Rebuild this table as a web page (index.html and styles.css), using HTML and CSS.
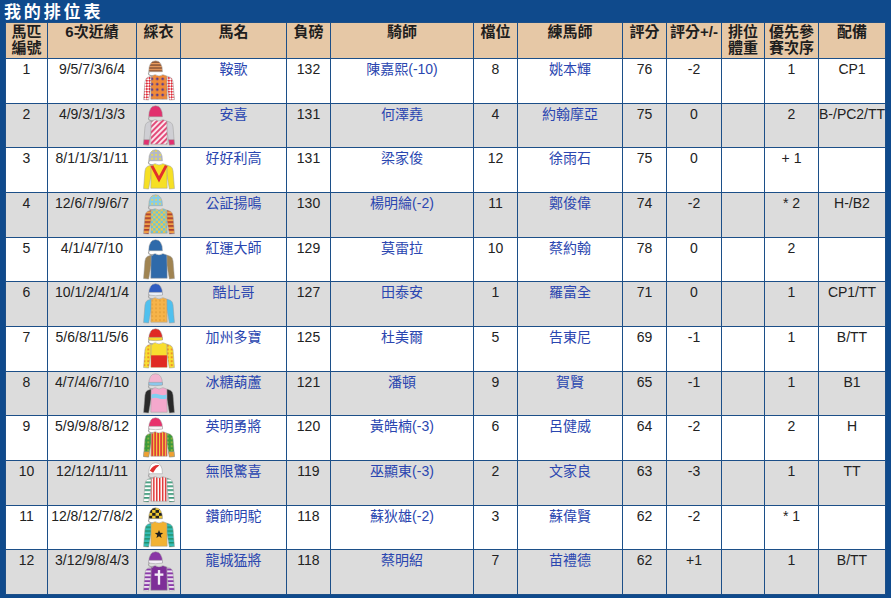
FILE: index.html
```html
<!DOCTYPE html>
<html lang="zh-Hant">
<head>
<meta charset="utf-8">
<title>我的排位表</title>
<link rel="stylesheet" href="styles.css">
</head>
<body>
<svg class="defs" width="0" height="0" aria-hidden="true">
  <defs>
    <path id="sl" d="M13,16.5 L9,17.8 Q7,19 6.6,22.5 L5.2,40.5 L10.4,41 L13,26 Z"/>
    <path id="sr" d="M29,16.5 L33,17.8 Q35,19 35.4,22.5 L36.8,40.5 L31.6,41 L29,26 Z"/>
    <path id="bd" d="M13,16.5 L17,15 Q21,17.8 25,15 L29,16.5 L29.4,40.2 L12.6,40.2 Z"/>
    <path id="cp" d="M10.5,12 Q10.5,0.8 17.5,0.8 Q24.5,0.8 24.5,12 Z"/>
    <path id="br" d="M10.4,9.6 L24.6,9.6 L24.6,12.3 Q17.5,13.8 10.4,12.3 Z"/>
    <path id="st" d="M11.2,12 Q8,15.5 15,16.5"/>
    <path id="cfl" d="M5.6,35.5 L11.2,35.5 L10.4,41 L5.2,40.5 Z"/>
    <path id="cfr" d="M36.4,35.5 L30.8,35.5 L31.6,41 L36.8,40.5 Z"/>
    <pattern id="hBO" width="4" height="3" patternUnits="userSpaceOnUse"><rect width="4" height="3" fill="#8a5638"/><rect width="4" height="1.3" fill="#f0a060"/></pattern>
    <pattern id="dOP" width="5.5" height="5.5" patternUnits="userSpaceOnUse"><rect width="5.5" height="5.5" fill="#f08a38"/><circle cx="2.75" cy="2.75" r="1.4" fill="#5a3c8c"/></pattern>
    <pattern id="cRW" width="4" height="4" patternUnits="userSpaceOnUse" patternTransform="rotate(45)"><rect width="4" height="4" fill="#ffffff"/><rect width="2" height="2" fill="#e0303c"/><rect x="2" y="2" width="2" height="2" fill="#e0303c"/></pattern>
    <pattern id="gWP" width="4" height="4" patternUnits="userSpaceOnUse" patternTransform="rotate(45)"><rect width="4" height="4" fill="#fbe4ec"/><rect width="2" height="4" fill="#e24a78"/></pattern>
    <pattern id="dGY" width="4" height="4" patternUnits="userSpaceOnUse"><rect width="4" height="4" fill="#b4b8c8"/><circle cx="2" cy="2" r="1" fill="#f2e040"/></pattern>
    <pattern id="dBY" width="4" height="4" patternUnits="userSpaceOnUse"><rect width="4" height="4" fill="#86cde6"/><circle cx="2" cy="2" r="1" fill="#f4d050"/></pattern>
    <pattern id="cYB" width="5" height="5" patternUnits="userSpaceOnUse"><rect width="5" height="5" fill="#f2c648"/><rect width="2.5" height="2.5" fill="#64c4e2"/><rect x="2.5" y="2.5" width="2.5" height="2.5" fill="#64c4e2"/></pattern>
    <pattern id="hOR" width="4" height="4" patternUnits="userSpaceOnUse"><rect width="4" height="4" fill="#f0a048"/><rect width="4" height="1.6" fill="#a0302a"/></pattern>
    <pattern id="dOD" width="4" height="4" patternUnits="userSpaceOnUse"><rect width="4" height="4" fill="#f6b44a"/><circle cx="2" cy="2" r="0.7" fill="#d08a24"/></pattern>
    <pattern id="dYR" width="4" height="4" patternUnits="userSpaceOnUse"><rect width="4" height="4" fill="#f8de30"/><circle cx="2" cy="2" r="0.8" fill="#e03020"/></pattern>
    <pattern id="vRY" width="3" height="3" patternUnits="userSpaceOnUse"><rect width="3" height="3" fill="#e03838"/><rect width="1.2" height="3" fill="#f2d040"/></pattern>
    <pattern id="dGG" width="4" height="4" patternUnits="userSpaceOnUse"><rect width="4" height="4" fill="#3c9a3c"/><circle cx="2" cy="2" r="0.8" fill="#e8d040"/></pattern>
    <pattern id="vRW" width="3" height="3" patternUnits="userSpaceOnUse"><rect width="3" height="3" fill="#ffffff"/><rect width="1.5" height="3" fill="#e03030"/></pattern>
    <pattern id="hWG" width="4" height="4" patternUnits="userSpaceOnUse"><rect width="4" height="4" fill="#ffffff"/><rect width="4" height="1.6" fill="#1f8a66"/></pattern>
    <pattern id="cKY" width="7" height="6" patternUnits="userSpaceOnUse"><rect width="7" height="6" fill="#f0c830"/><rect width="3.5" height="3" fill="#222222"/><rect x="3.5" y="3" width="3.5" height="3" fill="#222222"/></pattern>
    <pattern id="hTG" width="4" height="4" patternUnits="userSpaceOnUse"><rect width="4" height="4" fill="#34beb6"/><rect width="4" height="1.4" fill="#1f8a60"/></pattern>
    <pattern id="hPW" width="4" height="4" patternUnits="userSpaceOnUse"><rect width="4" height="4" fill="#8a3aa8"/><rect width="4" height="1.7" fill="#ffffff"/></pattern>
  </defs>
</svg>

<div class="frame">
  <div class="title">我 的 排 位 表</div>
  <table class="draw">
    <colgroup>
      <col class="c-no"><col class="c-form"><col class="c-silk"><col class="c-horse"><col class="c-wt"><col class="c-jockey"><col class="c-draw"><col class="c-trainer"><col class="c-rate"><col class="c-chg"><col class="c-bw"><col class="c-pri"><col class="c-gear">
    </colgroup>
    <thead>
      <tr>
        <th>馬匹<br>編號</th><th>6次近績</th><th>綵衣</th><th>馬名</th><th>負磅</th><th>騎師</th><th>檔位</th><th>練馬師</th><th>評分</th><th>評分+/-</th><th>排位<br>體重</th><th>優先參<br>賽次序</th><th>配備</th>
      </tr>
    </thead>
    <tbody>
      <tr>
        <td>1</td><td>9/5/7/3/6/4</td>
        <td class="silkcell"><svg class="silk" viewBox="0 0 42 42"><use href="#sl" fill="url(#cRW)"/><use href="#sr" fill="url(#cRW)"/><use href="#bd" fill="url(#dOP)"/><use href="#cp" fill="url(#hBO)"/><use href="#st" class="strap"/></svg></td>
        <td><a href="#">鞍歌</a></td><td>132</td><td><a href="#">陳嘉熙(-10)</a></td><td>8</td><td><a href="#">姚本輝</a></td><td>76</td><td>-2</td><td></td><td>1</td><td>CP1</td>
      </tr>
      <tr>
        <td>2</td><td>4/9/3/1/3/3</td>
        <td class="silkcell"><svg class="silk" viewBox="0 0 42 42"><use href="#sl" fill="#cfcfd4"/><use href="#sr" fill="#cfcfd4"/><use href="#cfl" fill="#e23070"/><use href="#cfr" fill="#e23070"/><use href="#bd" fill="url(#gWP)"/><use href="#cp" fill="#e2306e"/><use href="#st" class="strap"/></svg></td>
        <td><a href="#">安喜</a></td><td>131</td><td><a href="#">何澤堯</a></td><td>4</td><td><a href="#">約翰摩亞</a></td><td>75</td><td>0</td><td></td><td>2</td><td>B-/PC2/TT</td>
      </tr>
      <tr>
        <td>3</td><td>8/1/1/3/1/11</td>
        <td class="silkcell"><svg class="silk" viewBox="0 0 42 42"><use href="#sl" fill="#f6e024"/><use href="#sr" fill="#f6e024"/><use href="#bd" fill="#f6e024"/><path class="mark-v" d="M13.6,17 L21,31 L28.4,17"/><use href="#cp" fill="url(#dGY)"/><use href="#st" class="strap"/></svg></td>
        <td><a href="#">好好利高</a></td><td>131</td><td><a href="#">梁家俊</a></td><td>12</td><td><a href="#">徐雨石</a></td><td>75</td><td>0</td><td></td><td>+ 1</td><td></td>
      </tr>
      <tr>
        <td>4</td><td>12/6/7/9/6/7</td>
        <td class="silkcell"><svg class="silk" viewBox="0 0 42 42"><use href="#sl" fill="url(#hOR)"/><use href="#sr" fill="url(#hOR)"/><use href="#bd" fill="url(#cYB)"/><use href="#cp" fill="url(#dBY)"/><use href="#st" class="strap"/></svg></td>
        <td><a href="#">公証揚鳴</a></td><td>130</td><td><a href="#">楊明綸(-2)</a></td><td>11</td><td><a href="#">鄭俊偉</a></td><td>74</td><td>-2</td><td></td><td>* 2</td><td>H-/B2</td>
      </tr>
      <tr>
        <td>5</td><td>4/1/4/7/10</td>
        <td class="silkcell"><svg class="silk" viewBox="0 0 42 42"><use href="#sl" fill="#a08452"/><use href="#sr" fill="#a08452"/><use href="#bd" fill="#2f6aaa"/><use href="#cp" fill="#2f6aaa"/><use href="#st" class="strap"/></svg></td>
        <td><a href="#">紅運大師</a></td><td>129</td><td><a href="#">莫雷拉</a></td><td>10</td><td><a href="#">蔡約翰</a></td><td>78</td><td>0</td><td></td><td>2</td><td></td>
      </tr>
      <tr>
        <td>6</td><td>10/1/2/4/1/4</td>
        <td class="silkcell"><svg class="silk" viewBox="0 0 42 42"><use href="#sl" fill="#4fc0ee"/><use href="#sr" fill="#4fc0ee"/><use href="#bd" fill="url(#dOD)"/><use href="#cp" fill="#2f5cc0"/><use href="#br" fill="#e8eef8"/><use href="#st" class="strap"/></svg></td>
        <td><a href="#">酷比哥</a></td><td>127</td><td><a href="#">田泰安</a></td><td>1</td><td><a href="#">羅富全</a></td><td>71</td><td>0</td><td></td><td>1</td><td>CP1/TT</td>
      </tr>
      <tr>
        <td>7</td><td>5/6/8/11/5/6</td>
        <td class="silkcell"><svg class="silk" viewBox="0 0 42 42"><use href="#sl" fill="url(#dYR)"/><use href="#sr" fill="url(#dYR)"/><use href="#bd" fill="#f8de30"/><rect class="band" x="12.9" y="28" width="16.2" height="12.2" fill="#e02a24"/><use href="#cp" fill="#e02a24"/><use href="#br" fill="#f8d830"/><use href="#st" class="strap"/></svg></td>
        <td><a href="#">加州多寶</a></td><td>125</td><td><a href="#">杜美爾</a></td><td>5</td><td><a href="#">告東尼</a></td><td>69</td><td>-1</td><td></td><td>1</td><td>B/TT</td>
      </tr>
      <tr>
        <td>8</td><td>4/7/4/6/7/10</td>
        <td class="silkcell"><svg class="silk" viewBox="0 0 42 42"><use href="#sl" fill="#2a2a2a"/><use href="#sr" fill="#2a2a2a"/><use href="#bd" fill="#f4a8cc"/><path class="band" d="M13.3,22 Q17,20.5 21,22 Q25,23.5 28.8,22 L28.8,26 Q25,27.5 21,26 Q17,24.5 13.3,26 Z" fill="#7fd0f0"/><use href="#cp" fill="#f4b4d0"/><use href="#br" fill="#8cc8ec"/><use href="#st" class="strap"/></svg></td>
        <td><a href="#">冰糖葫蘆</a></td><td>121</td><td><a href="#">潘頓</a></td><td>9</td><td><a href="#">賀賢</a></td><td>65</td><td>-1</td><td></td><td>1</td><td>B1</td>
      </tr>
      <tr>
        <td>9</td><td>5/9/9/8/8/12</td>
        <td class="silkcell"><svg class="silk" viewBox="0 0 42 42"><use href="#sl" fill="url(#dGG)"/><use href="#sr" fill="url(#dGG)"/><use href="#cfl" fill="#f0a030"/><use href="#cfr" fill="#f0a030"/><use href="#bd" fill="url(#vRY)"/><use href="#cp" fill="#e8306c"/><use href="#br" fill="#f8f0f4"/><use href="#st" class="strap"/></svg></td>
        <td><a href="#">英明勇將</a></td><td>120</td><td><a href="#">黃皓楠(-3)</a></td><td>6</td><td><a href="#">呂健威</a></td><td>64</td><td>-2</td><td></td><td>2</td><td>H</td>
      </tr>
      <tr>
        <td>10</td><td>12/12/11/11</td>
        <td class="silkcell"><svg class="silk" viewBox="0 0 42 42"><use href="#sl" fill="url(#hWG)"/><use href="#sr" fill="url(#hWG)"/><use href="#bd" fill="url(#vRW)"/><use href="#cp" fill="#ffffff"/><path class="band" d="M11.6,9 Q15,2.3 21.5,3.3 Q17,6 15,11 Z" fill="#e03030"/><use href="#st" class="strap"/></svg></td>
        <td><a href="#">無限驚喜</a></td><td>119</td><td><a href="#">巫顯東(-3)</a></td><td>2</td><td><a href="#">文家良</a></td><td>63</td><td>-3</td><td></td><td>1</td><td>TT</td>
      </tr>
      <tr>
        <td>11</td><td>12/8/12/7/8/2</td>
        <td class="silkcell"><svg class="silk" viewBox="0 0 42 42"><use href="#sl" fill="url(#hTG)"/><use href="#sr" fill="url(#hTG)"/><use href="#bd" fill="#f2b232"/><polygon class="band" points="21,23.5 22.12,26.46 25.28,26.61 22.81,28.59 23.65,31.64 21,29.9 18.35,31.64 19.19,28.59 16.72,26.61 19.88,26.46" fill="#1e1e1e"/><use href="#cp" fill="url(#cKY)"/><use href="#st" class="strap"/></svg></td>
        <td><a href="#">鑽飾明駝</a></td><td>118</td><td><a href="#">蘇狄雄(-2)</a></td><td>3</td><td><a href="#">蘇偉賢</a></td><td>62</td><td>-2</td><td></td><td>* 1</td><td></td>
      </tr>
      <tr>
        <td>12</td><td>3/12/9/8/4/3</td>
        <td class="silkcell"><svg class="silk" viewBox="0 0 42 42"><use href="#sl" fill="url(#hPW)"/><use href="#sr" fill="url(#hPW)"/><use href="#bd" fill="#7e2e98"/><rect class="band" x="19.8" y="19.5" width="2.4" height="15" fill="#f4eef8"/><rect class="band" x="16.5" y="23" width="9" height="2.4" fill="#f4eef8"/><use href="#cp" fill="#8a36a6"/><use href="#br" fill="#f4eef8"/><use href="#st" class="strap"/></svg></td>
        <td><a href="#">龍城猛將</a></td><td>118</td><td><a href="#">蔡明紹</a></td><td>7</td><td><a href="#">苗禮德</a></td><td>62</td><td>+1</td><td></td><td>1</td><td>B/TT</td>
      </tr>
    </tbody>
  </table>
</div>
</body>
</html>
```

FILE: styles.css
```css
html, body {
  margin: 0;
  padding: 0;
  background: #ffffff;
}

.defs {
  display: block;
  width: 0;
  height: 0;
  overflow: hidden;
}

.frame {
  width: 891px;
  height: 598px;
  box-sizing: border-box;
  background: #0f4a8c;
  padding: 0 5px 4px 5px;
  display: flex;
  flex-direction: column;
  overflow: hidden;
}

.title {
  height: 22px;
  line-height: 22px;
  color: #ffffff;
  font-family: "Noto Sans CJK TC", "Noto Sans CJK SC", sans-serif;
  font-weight: bold;
  font-size: 17px;
  word-spacing: -1px;
  margin-left: -1px;
}

.draw {
  border-collapse: collapse;
  table-layout: fixed;
  width: 881px;
  font-family: "Liberation Sans", "Noto Sans CJK TC", sans-serif;
  font-size: 14px;
  line-height: 16px;
  color: #222222;
}

.c-no { width: 42px; }
.c-form { width: 89px; }
.c-silk { width: 44px; }
.c-horse { width: 106px; }
.c-wt { width: 44px; }
.c-jockey { width: 143px; }
.c-draw { width: 44px; }
.c-trainer { width: 105px; }
.c-rate { width: 44px; }
.c-chg { width: 55px; }
.c-bw { width: 43px; }
.c-pri { width: 54px; }
.c-gear { width: 67px; }

.draw th,
.draw td {
  border: 1px solid #1c4f88;
  text-align: center;
  vertical-align: top;
  white-space: nowrap;
  padding: 2px 0 0 0;
}

.draw th {
  background: #e6c8a6;
  font-weight: bold;
  font-size: 15px;
  color: #1e1e1e;
  padding-top: 1px;
}

.draw thead tr {
  height: 36px;
}

.draw tbody tr {
  height: 44.67px;
}

.draw tbody tr:nth-child(odd) td {
  background: #ffffff;
}

.draw tbody tr:nth-child(even) td {
  background: #dcdcdc;
}

.draw td.silkcell {
  padding: 1px 0 0 0;
}

.silk {
  display: block;
  width: 42px;
  height: 41px;
  margin: 0 auto;
}

.silk use {
  stroke: #9a9a9a;
  stroke-width: 0.5;
}

.silk use.strap {
  fill: none;
  stroke: #a8a8a8;
  stroke-width: 1.2;
}

.silk .mark-v {
  fill: none;
  stroke: #e2302c;
  stroke-width: 3;
}

.draw a {
  color: #2a46b0;
  text-decoration: none;
}
```
